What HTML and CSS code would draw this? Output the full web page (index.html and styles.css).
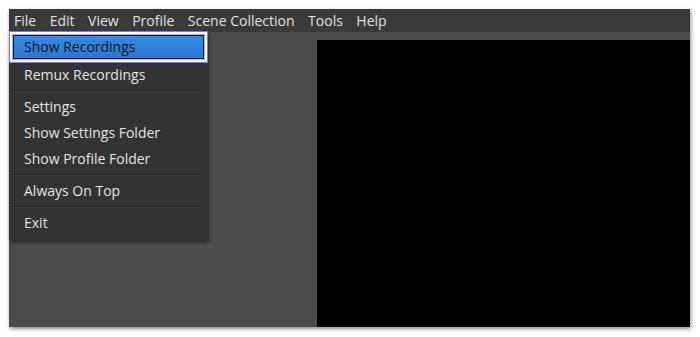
FILE: index.html
```html
<!DOCTYPE html>
<html>
<head>
<meta charset="utf-8">
<link rel="stylesheet" href="styles.css">
</head>
<body>
<div class="window">
  <div class="menubar">
    <span class="mb-item">File</span>
    <span class="mb-item">Edit</span>
    <span class="mb-item">View</span>
    <span class="mb-item">Profile</span>
    <span class="mb-item">Scene Collection</span>
    <span class="mb-item">Tools</span>
    <span class="mb-item">Help</span>
  </div>
  <div class="main">
    <div class="left-pane"></div>
    <div class="preview"></div>
    <div class="dropdown">
      <div class="item first"><span class="hl">Show Recordings</span></div>
      <div class="item">Remux Recordings</div>
      <div class="sep"></div>
      <div class="item">Settings</div>
      <div class="item">Show Settings Folder</div>
      <div class="item">Show Profile Folder</div>
      <div class="sep"></div>
      <div class="item">Always On Top</div>
      <div class="sep"></div>
      <div class="item">Exit</div>
    </div>
  </div>
</div>
</body>
</html>
```
FILE: styles.css
```css
html, body {
  margin: 0;
  padding: 0;
  background: #ffffff;
}
body {
  padding: 9px 10px 10px 9px;
  font-family: "Open Sans", "Noto Sans", sans-serif;
  font-size: 14px;
}
.window {
  width: 681px;
  height: 318px;
  display: flex;
  flex-direction: column;
  box-shadow: 1px 2px 4px rgba(0,0,0,0.45);
}
.menubar {
  height: 23px;
  background: #3a3a3a;
  display: flex;
  align-items: center;
  padding-left: 5px;
  color: #e0e0e0;
}
.mb-item {
  margin-right: 13.5px;
  line-height: 23px;
}
.main {
  position: relative;
  flex: 1;
  background: #4c4c4c;
  display: flex;
  padding-top: 8px;
}
.left-pane {
  width: 308px;
}
.preview {
  flex: 1;
  background: #000000;
}
.dropdown {
  position: absolute;
  left: 0;
  top: 0;
  width: 199px;
  padding-bottom: 4px;
  background: #333333;
  box-shadow: 1px 2px 3px rgba(0,0,0,0.5);
  color: #e4e4e4;
}
.item {
  height: 26px;
  line-height: 25px;
  padding-left: 15px;
}
.item.first {
  height: 30px;
  padding: 4px 5px 4px 5px;
  box-sizing: border-box;
}
.hl {
  display: block;
  height: 22px;
  line-height: 21px;
  padding-left: 10px;
  background: linear-gradient(#3788e2, #2a78d2);
  color: #151515;
  box-shadow: 0 0 0 1px #1c1c2a, 0 0 0 2px #a8a8f0, 0 0 0 4px #ffffff, 0 0 0 5px #7b7be0;
}
.sep {
  height: 1px;
  margin: 2px 8px 2px 3px;
  background: #262626;
  border-bottom: 1px solid #3b3b3b;
}
```
